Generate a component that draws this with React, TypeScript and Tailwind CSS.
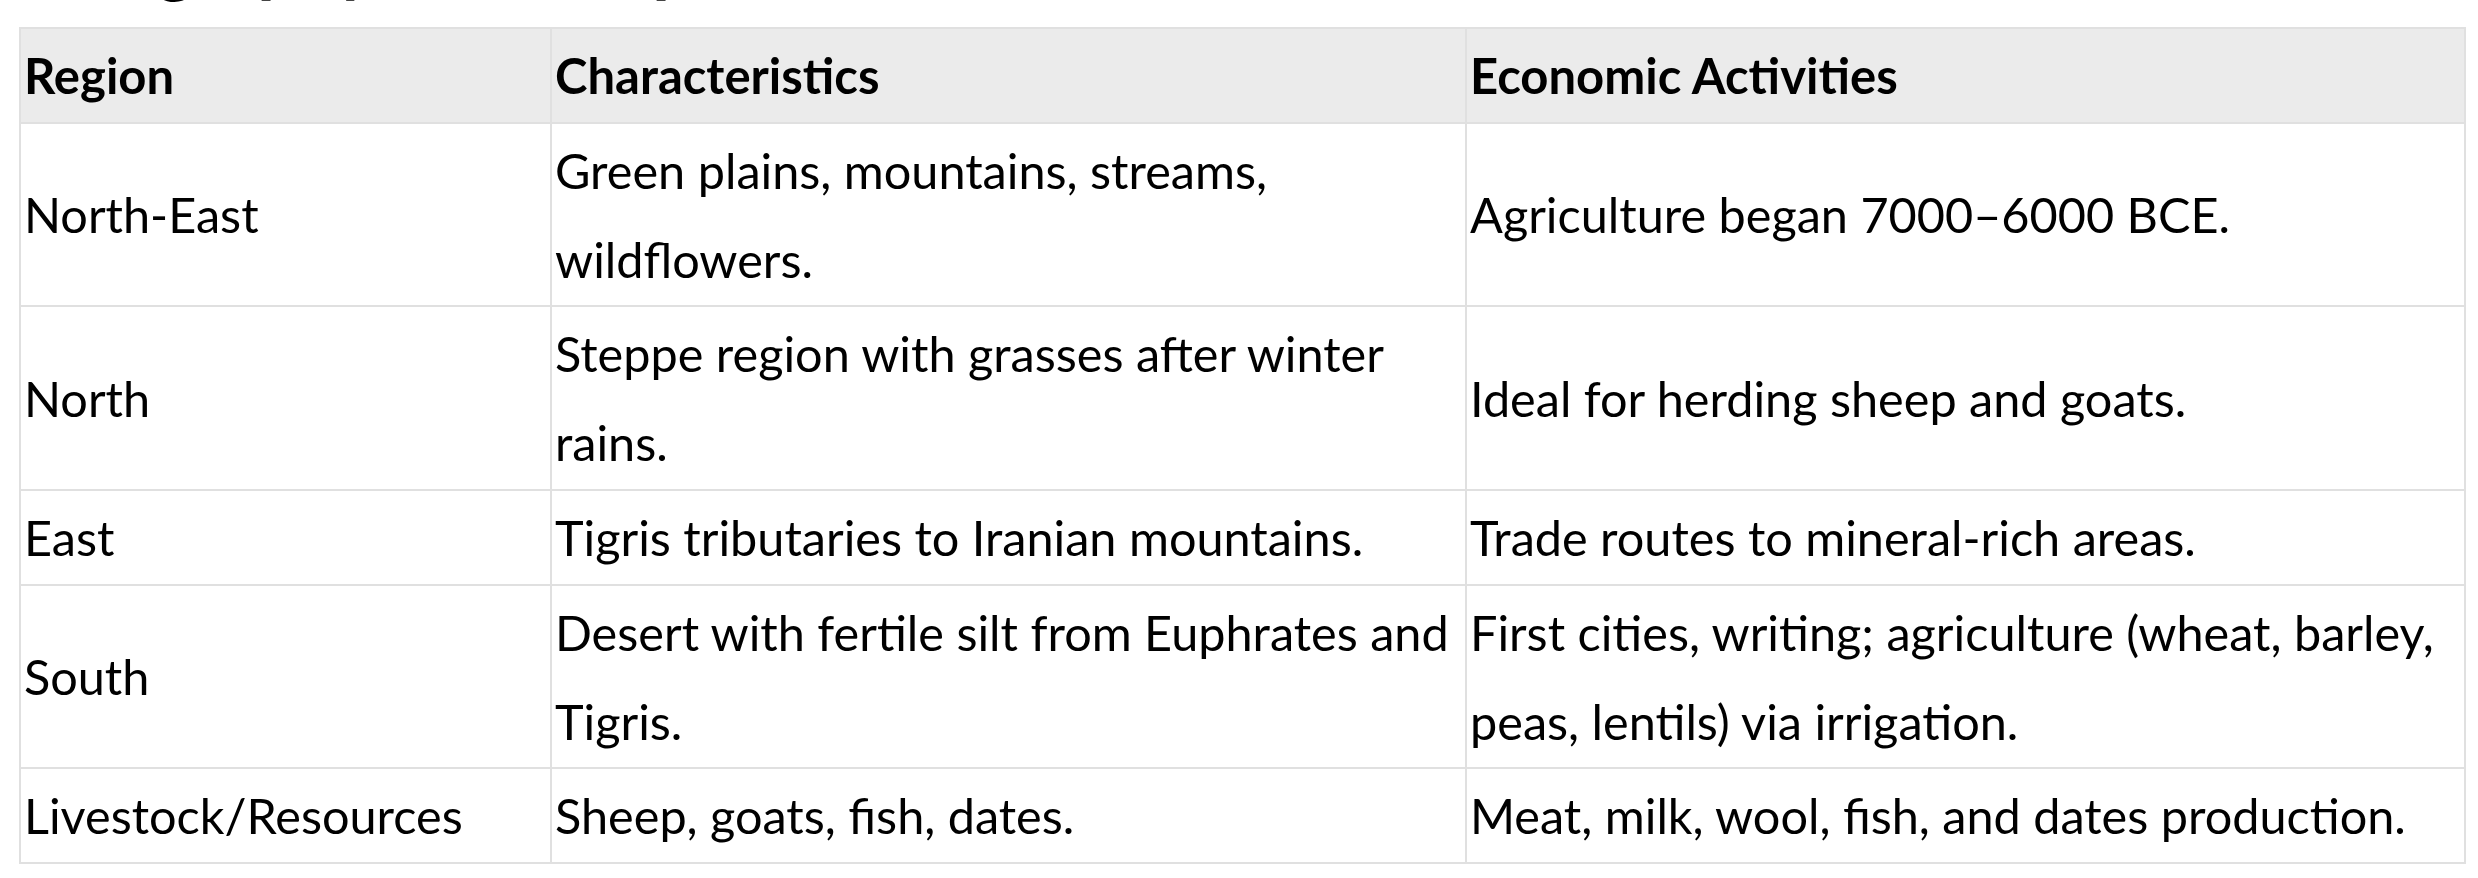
import React from 'react';

const rows = [
  {
    region: 'North-East',
    traits: 'Green plains, mountains, streams, wildflowers.',
    economy: 'Agriculture began 7000–6000 BCE.',
  },
  {
    region: 'North',
    traits: 'Steppe region with grasses after winter rains.',
    economy: 'Ideal for herding sheep and goats.',
  },
  {
    region: 'East',
    traits: 'Tigris tributaries to Iranian mountains.',
    economy: 'Trade routes to mineral-rich areas.',
  },
  {
    region: 'South',
    traits: 'Desert with fertile silt from Euphrates and Tigris.',
    economy: 'First cities, writing; agriculture (wheat, barley, peas, lentils) via irrigation.',
  },
  {
    region: 'Livestock/Resources',
    traits: 'Sheep, goats, fish, dates.',
    economy: 'Meat, milk, wool, fish, and dates production.',
  },
];

export default function App() {
  return (
    <div className="h-[878px] overflow-hidden bg-white text-black font-['Lato','Liberation_Sans',sans-serif]">
      {/* heading sits above the viewport, only descender tips show */}
      <h2 className="-mt-[76px] mb-[31px] pl-[25px] text-[72px] leading-[72px] font-bold">
        Geography of Mesopotamia
      </h2>

      <table className="ml-[19px] w-[2445px] table-fixed border-collapse text-[48.6px] leading-[88.8px]">
        <colgroup>
          <col className="w-[531px]" />
          <col className="w-[915px]" />
          <col className="w-[999px]" />
        </colgroup>
        <thead>
          <tr className="bg-[#ebebeb] text-[49px]">
            <th className="border-2 border-[#e0e0e0] px-[3px] py-[2px] text-left align-middle font-bold">Region</th>
            <th className="border-2 border-[#e0e0e0] px-[3px] py-[2px] text-left align-middle font-bold">Characteristics</th>
            <th className="border-2 border-[#e0e0e0] px-[3px] py-[2px] text-left align-middle font-bold">Economic Activities</th>
          </tr>
        </thead>
        <tbody>
          {rows.map((row) => (
            <tr key={row.region}>
              <td className="border-2 border-[#e0e0e0] px-[3px] py-[2px] align-middle">{row.region}</td>
              <td className="border-2 border-[#e0e0e0] px-[3px] py-[2px] align-middle">{row.traits}</td>
              <td className="border-2 border-[#e0e0e0] px-[3px] py-[2px] align-middle">{row.economy}</td>
            </tr>
          ))}
        </tbody>
      </table>
    </div>
  );
}
